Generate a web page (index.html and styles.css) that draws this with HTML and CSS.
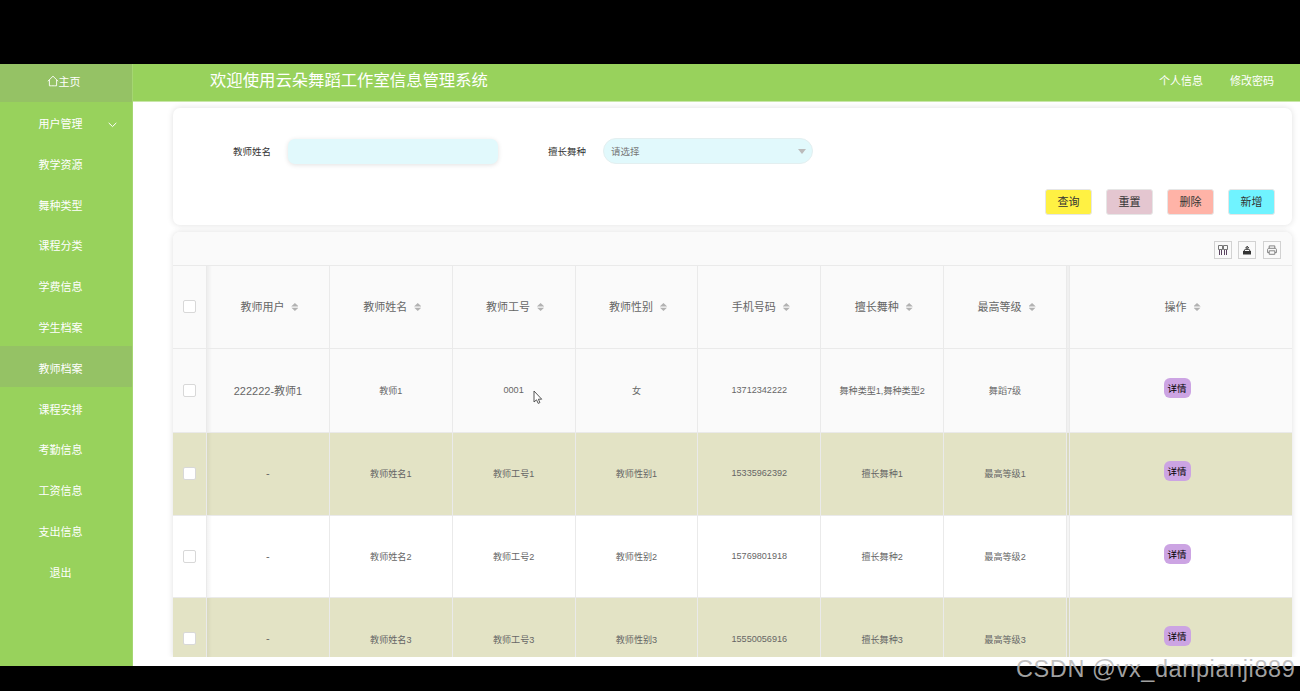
FILE: index.html
```html
<!DOCTYPE html>
<html lang="zh-CN">
<head>
    <meta charset="UTF-8">
    <meta name="viewport" content="width=device-width, initial-scale=1.0">
    <title>云朵舞蹈工作室信息管理系统</title>
    <link rel="stylesheet" href="styles.css">
</head>
<body>
    <div class="app">
        <aside class="sidebar">
            <a class="home">
                <svg width="12" height="12" viewBox="0 0 12 12" fill="none" stroke="currentColor" stroke-width="0.9"><path d="M0.8 6.3 L6 1.2 L11.2 6.3 M2.4 5 V10.8 H4.6 M7.4 10.8 H9.6 V5 M4.6 10.8 H7.4"/></svg>主页
            </a>
            <ul class="menu">
                <li>用户管理
                    <svg class="arrow" width="9" height="6" viewBox="0 0 9 6" fill="none" stroke="currentColor"><path d="M0.7 0.9 L4.5 4.6 L8.3 0.9"/></svg>
                </li>
                <li>教学资源</li>
                <li>舞种类型</li>
                <li>课程分类</li>
                <li>学费信息</li>
                <li>学生档案</li>
                <li class="active">教师档案</li>
                <li>课程安排</li>
                <li>考勤信息</li>
                <li>工资信息</li>
                <li>支出信息</li>
                <li>退出</li>
            </ul>
        </aside>

        <div class="main">
            <header>
                <h1>欢迎使用云朵舞蹈工作室信息管理系统</h1>
                <nav>
                    <a>个人信息</a>
                    <a>修改密码</a>
                </nav>
            </header>

            <section class="card search">
                <div class="fields">
                    <label>教师姓名</label>
                    <div class="input"></div>
                    <label class="second">擅长舞种</label>
                    <div class="select">请选择<i></i></div>
                </div>
                <div class="buttons">
                    <button class="btn query">查询</button>
                    <button class="btn reset">重置</button>
                    <button class="btn delete">删除</button>
                    <button class="btn add">新增</button>
                </div>
            </section>

            <section class="card list">
                <div class="toolbar">
                    <span class="tool"><svg width="10" height="10" viewBox="0 0 10 10" fill="none" stroke="#666" stroke-width="0.9"><path d="M0.5 0.5 H4.5 V4.5 H0.5 Z M5.5 0.5 H9.5 V4.5 H5.5 Z"/><path stroke="#4a3050" d="M1.5 5 V10 M3.5 5 V10 M6.5 5 V10 M8.5 5 V10"/></svg></span>
                    <span class="tool"><svg width="10" height="10" viewBox="0 0 10 10"><path fill="#333" d="M1 6 H9 V9.6 H1 Z"/><path fill="none" stroke="#333" d="M2 6 L3.2 4.2 H7 L8 6 M5 4.8 V2 M3.6 3 L5.2 1.2 L6.8 3"/></svg></span>
                    <span class="tool last"><svg width="10" height="10" viewBox="0 0 10 10" fill="none" stroke="#777" stroke-width="0.9"><path d="M2.2 3.3 V0.9 H7.8 V3.3 M2 7.6 H0.6 V4.4 L1.4 3.3 H8.6 L9.4 4.4 V7.6 H8 M2.2 5.8 H7.8 V9.3 H2.2 Z"/></svg></span>
                </div>
                <table>
                    <colgroup>
                        <col class="col-check">
                        <col><col><col><col><col><col><col>
                        <col class="col-gap">
                        <col class="col-action">
                    </colgroup>
                    <thead>
                        <tr>
                            <th><span class="check"></span></th>
                            <th class="shade">教师用户<i class="sort"></i></th>
                            <th>教师姓名<i class="sort"></i></th>
                            <th>教师工号<i class="sort"></i></th>
                            <th>教师性别<i class="sort"></i></th>
                            <th>手机号码<i class="sort"></i></th>
                            <th>擅长舞种<i class="sort"></i></th>
                            <th>最高等级<i class="sort"></i></th>
                            <th class="gap"></th>
                            <th>操作<i class="sort"></i></th>
                        </tr>
                    </thead>
                    <tbody>
                        <tr class="hover">
                            <td><span class="check"></span></td>
                            <td class="shade user">222222-教师1</td>
                            <td>教师1</td>
                            <td>0001</td>
                            <td>女</td>
                            <td>13712342222</td>
                            <td>舞种类型1,舞种类型2</td>
                            <td>舞蹈7级</td>
                            <td class="gap"></td>
                            <td><a class="detail">详情</a></td>
                        </tr>
                        <tr class="even">
                            <td><span class="check"></span></td>
                            <td class="shade user">-</td>
                            <td>教师姓名1</td>
                            <td>教师工号1</td>
                            <td>教师性别1</td>
                            <td>15335962392</td>
                            <td>擅长舞种1</td>
                            <td>最高等级1</td>
                            <td class="gap"></td>
                            <td><a class="detail">详情</a></td>
                        </tr>
                        <tr>
                            <td><span class="check"></span></td>
                            <td class="shade user">-</td>
                            <td>教师姓名2</td>
                            <td>教师工号2</td>
                            <td>教师性别2</td>
                            <td>15769801918</td>
                            <td>擅长舞种2</td>
                            <td>最高等级2</td>
                            <td class="gap"></td>
                            <td><a class="detail">详情</a></td>
                        </tr>
                        <tr class="even">
                            <td><span class="check"></span></td>
                            <td class="shade user">-</td>
                            <td>教师姓名3</td>
                            <td>教师工号3</td>
                            <td>教师性别3</td>
                            <td>15550056916</td>
                            <td>擅长舞种3</td>
                            <td>最高等级3</td>
                            <td class="gap"></td>
                            <td><a class="detail">详情</a></td>
                        </tr>
                    </tbody>
                </table>
            </section>
        </div>
    </div>

    <svg class="cursor" width="10" height="15" viewBox="0 0 10 15"><path fill="#fff" stroke="#444" stroke-width="0.9" d="M1 1 V12 L3.5 9.8 L5.2 13.4 L6.9 12.6 L5.4 9.2 H8.7 Z"/></svg>
    <div class="watermark">CSDN @vx_danpianji889</div>
</body>
</html>
```
FILE: styles.css
```css
:root {
    --green: #98d25c;
    --green-dark: #95c265;
    --line: #eaeaea;
    --row: #e3e3c5;
}

* {
    box-sizing: border-box;
}

body {
    margin: 0;
    padding-top: 64px;
    height: 691px;
    overflow: hidden;
    background: #000;
    color: #666;
    font-family: "Liberation Sans", "Noto Sans CJK SC", sans-serif;
    font-size: 11px;
}

.app {
    display: flex;
    height: 602px;
    background: #fff;
}

.sidebar {
    width: 133px;
    background: var(--green);
    color: #fff;
    border-right: 1px solid #a5d672;
}

.home {
    display: flex;
    align-items: center;
    justify-content: center;
    height: 38px;
    padding: 0 5px 5px 0;
    background: var(--green-dark);
}

.menu {
    list-style: none;
    margin: -1px 0 0;
    padding: 0;
}

.menu li {
    position: relative;
    height: 40.8px;
    line-height: 47px;
    padding-right: 11px;
    text-align: center;
}

.menu li.active {
    background: var(--green-dark);
}

.menu .arrow {
    position: absolute;
    right: 15px;
    top: 21px;
}

.main {
    flex: 1;
    min-width: 0;
    display: flex;
    flex-direction: column;
}

header {
    display: flex;
    justify-content: space-between;
    height: 38px;
    padding: 0 26px 0 77px;
    background: var(--green);
    border-bottom: 1px solid #c8e6a9;
    color: #fff;
    line-height: 34px;
}

header h1 {
    margin: 0;
    font-size: 16.35px;
    font-weight: normal;
    line-height: 33px;
}

header nav {
    display: flex;
    gap: 27px;
}

.card {
    margin: 0 8px 0 40px;
    border-radius: 7px;
    background: #fff;
    box-shadow: 0 0 6px rgba(0, 0, 0, 0.13);
}

.search {
    height: 117px;
    margin-top: 6px;
    padding: 29px 17px 0 60px;
}

.fields {
    display: flex;
    align-items: center;
    height: 28px;
    color: #333;
    font-size: 9.5px;
}

.fields label {
    width: 55px;
}

.fields label.second {
    margin-left: 50px;
}

.input {
    width: 210px;
    height: 25px;
    border-radius: 7px;
    background: #e1f9fc;
    box-shadow: 0 1px 5px rgba(0, 0, 0, 0.12);
}

.select {
    display: flex;
    align-items: center;
    justify-content: space-between;
    width: 210px;
    height: 26px;
    padding: 0 6px 0 7px;
    border: 1px solid #e3eff0;
    border-radius: 13px;
    background: #e1f9fc;
    color: #777;
}

.select i {
    border: 4px solid transparent;
    border-top: 5px solid #bbb;
    border-bottom: none;
}

.buttons {
    display: flex;
    justify-content: flex-end;
    gap: 14px;
    margin-top: 24px;
}

.btn {
    width: 47px;
    height: 26px;
    padding: 0 0 2px;
    border: 1px solid #e6e6e6;
    border-radius: 3px;
    color: #333;
    font-family: inherit;
    font-size: 11px;
}

.query {
    background: #fff143;
}

.reset {
    background: #e4c6d0;
}

.delete {
    background: #ffb3a7;
}

.add {
    background: #70f3ff;
}

.list {
    height: 425px;
    margin-top: 7px;
    border-radius: 7px 7px 0 0;
    overflow: hidden;
    clip-path: inset(-6px -6px 0 -6px);
}

.toolbar {
    display: flex;
    justify-content: flex-end;
    gap: 6px;
    height: 34px;
    padding: 9px 11px 0 0;
    background: #fafafa;
    border-bottom: 1px solid var(--line);
}

.tool {
    display: flex;
    align-items: center;
    justify-content: center;
    width: 18px;
    height: 18px;
    border: 1px solid #d2d2d2;
}

.tool.last {
    margin-left: 1px;
}

table {
    width: 1119px;
    table-layout: fixed;
    border-collapse: separate;
    border-spacing: 0;
}

.col-check {
    width: 34px;
}

.col-gap {
    width: 3px;
}

.col-action {
    width: 222px;
}

th,
td {
    height: 82.7px;
    padding: 0;
    border-right: 1px solid var(--line);
    border-bottom: 1px solid var(--line);
    text-align: center;
    vertical-align: middle;
    font-weight: normal;
}

th {
    height: 83px;
    padding-bottom: 2px;
}

th + th {
    padding-left: 3px;
}

th.gap {
    padding-left: 0;
}

th:last-child,
td:last-child {
    border-right: none;
}

td {
    padding-bottom: 1px;
    font-size: 9.1px;
}

td.user {
    padding-bottom: 2px;
    font-size: 11px;
}

thead,
.hover {
    background: #fafafa;
}

.hover td {
    height: 84px;
}

.even {
    background: var(--row);
}

.shade {
    background: linear-gradient(to right, rgba(0, 0, 0, 0.05), transparent 5px);
}

.gap {
    background: rgba(0, 0, 0, 0.04);
}

.check {
    display: block;
    width: 13px;
    height: 13px;
    margin: 0 auto;
    border: 1px solid #d8d8d8;
    border-radius: 2px;
    background: #fff;
}

.sort {
    display: inline-block;
    width: 7px;
    height: 8px;
    margin-left: 7px;
    background: #b2b2b2;
    clip-path: polygon(50% 0, 100% 42%, 100% 44%, 0 44%, 0 42%, 50% 0, 0 58%, 100% 58%, 50% 100%, 0 58%);
}

.detail {
    display: block;
    width: 27px;
    height: 20px;
    margin: -5px auto 0;
    transform: translateX(-4px);
    border-radius: 6px;
    background: #cca4e3;
    color: #000;
    font-size: 9.5px;
    line-height: 21px;
}

.cursor {
    position: absolute;
    left: 533px;
    top: 390px;
}

.watermark {
    position: absolute;
    left: 1016px;
    top: 656px;
    color: rgba(185, 185, 185, 0.88);
    font-size: 23.5px;
    line-height: 27px;
    letter-spacing: 0.6px;
    white-space: nowrap;
}
```
